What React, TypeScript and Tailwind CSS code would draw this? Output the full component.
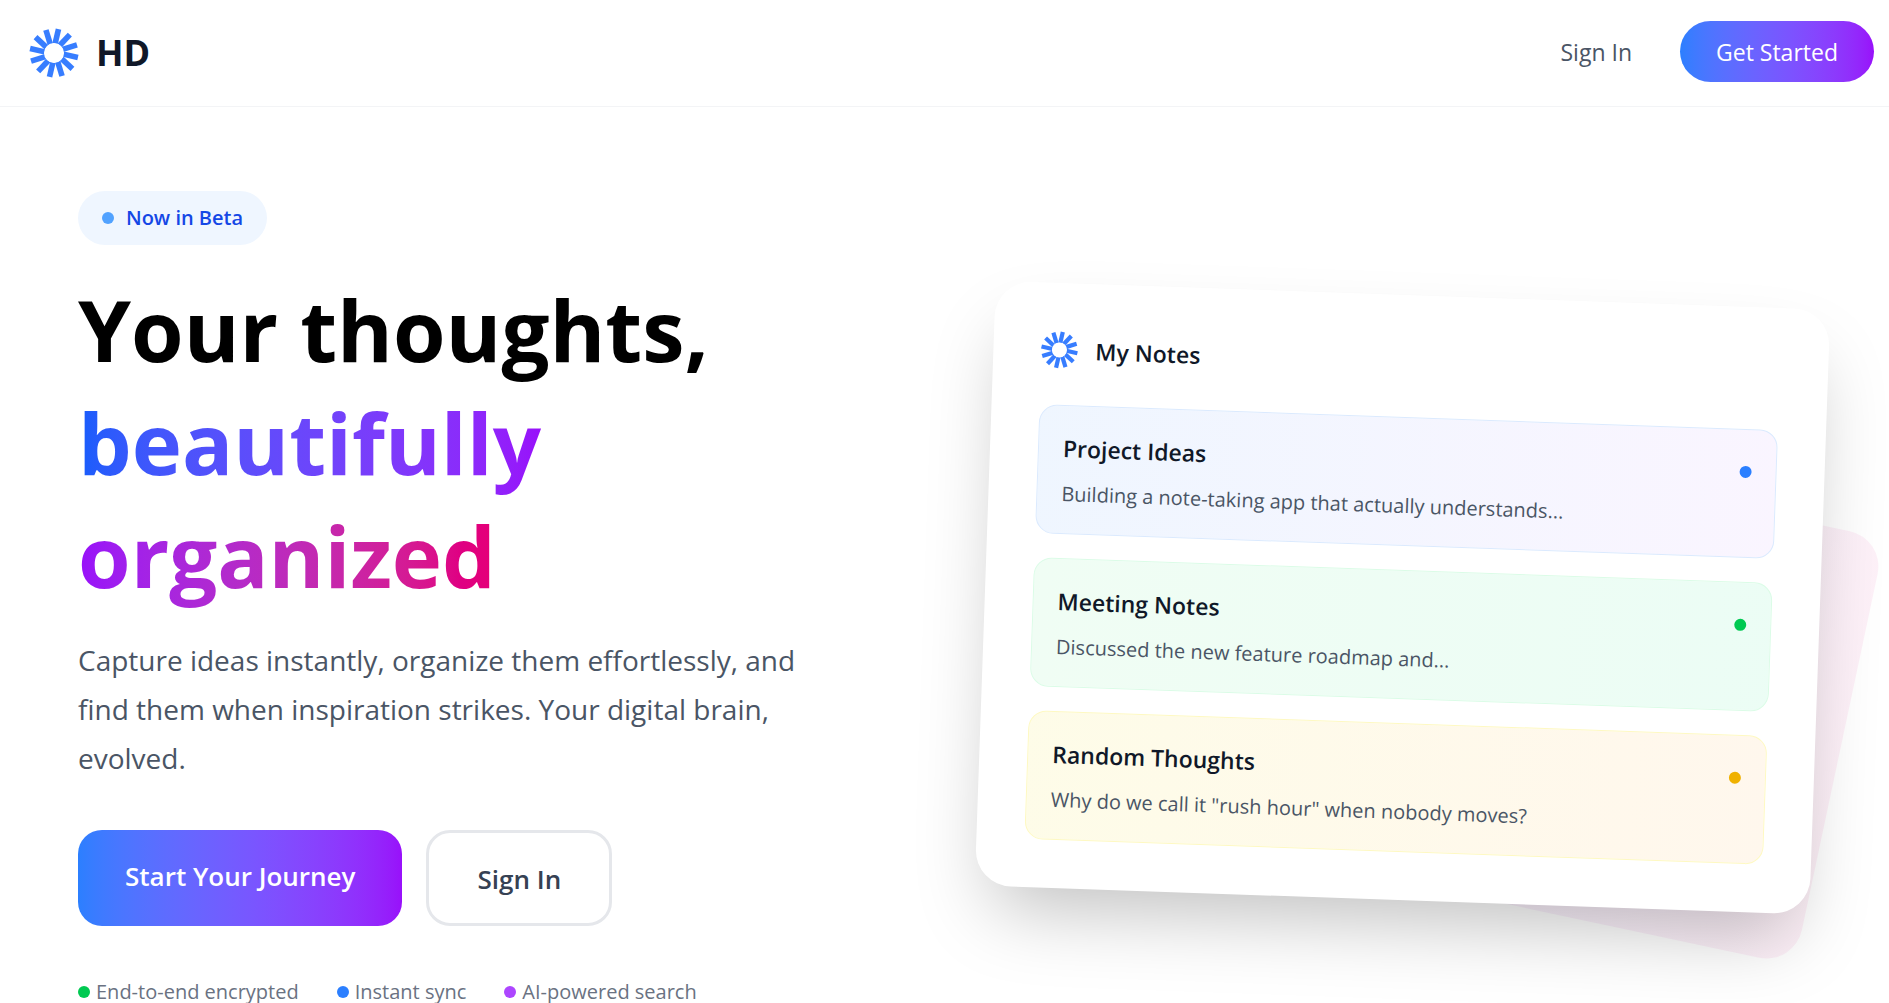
const RAYS = [13, 43, 73, 103, 133, 163, 193, 223, 253, 283, 313, 343];

function Logo({ className }: { className: string }) {
  return (
    <svg viewBox="0 0 48 48" className={`overflow-visible ${className}`} aria-hidden="true">
      {RAYS.map((angle) => (
        <rect key={angle} x="20.2" y="-0.3" width="5.6" height="15" fill="#377dff" transform={`rotate(${angle} 24 24)`} />
      ))}
      <circle cx="24" cy="24" r="10" fill="#fff" />
    </svg>
  );
}

const NOTES = [
  {
    title: "Project Ideas",
    text: "Building a note-taking app that actually understands...",
    box: "border-blue-100 from-blue-50 to-purple-50",
    dot: "bg-blue-500",
  },
  {
    title: "Meeting Notes",
    text: "Discussed the new feature roadmap and...",
    box: "border-green-100 from-green-50 to-emerald-50",
    dot: "bg-green-500",
  },
  {
    title: "Random Thoughts",
    text: 'Why do we call it "rush hour" when nobody moves?',
    box: "border-yellow-100 from-yellow-50 to-orange-50",
    dot: "bg-yellow-500",
  },
];

const FEATURES = [
  { label: "End-to-end encrypted", dot: "bg-green-500" },
  { label: "Instant sync", dot: "bg-blue-500" },
  { label: "AI-powered search", dot: "bg-purple-500" },
];

export default function App() {
  return (
    <div className="min-h-screen overflow-hidden bg-white font-['Open_Sans','Noto_Sans',sans-serif] text-gray-900">
      <header className="flex items-start justify-between border-b border-gray-100 pt-[21px] pr-[15px] pb-[22px] pl-[30px]">
        <a href="#" className="flex items-center gap-[18px]">
          <Logo className="size-12" />
          <span className="pt-px text-[36px] leading-[62px] font-bold">HD</span>
        </a>
        <nav className="flex items-center gap-12">
          <a href="#signin" className="text-[23px] leading-9 text-gray-600">Sign In</a>
          <button type="button" className="rounded-full bg-linear-to-r from-blue-500 to-purple-600 px-9 pt-[13px] pb-[11px] text-[23px] leading-[37px] text-white">
            Get Started
          </button>
        </nav>
      </header>

      <main className="grid grid-cols-2 items-center gap-24 px-[78px] pt-[84px]">
        <section>
          <div className="inline-flex items-center gap-3 rounded-full bg-blue-50 px-6 py-3 align-top">
            <span className="size-3 rounded-full bg-blue-400" />
            <span className="text-[20px] leading-[30px] font-semibold text-blue-700">Now in Beta</span>
          </div>
          <h1 className="mt-7 text-[85px] leading-[113px] font-bold text-black">
            <span className="block">Your thoughts,</span>
            <span className="block w-fit bg-linear-to-r from-blue-600 to-purple-600 bg-clip-text text-transparent">beautifully</span>
            <span className="block w-fit bg-linear-to-r from-purple-600 to-pink-600 bg-clip-text text-transparent">organized</span>
          </h1>
          <p className="mt-6 max-w-[768px] text-[28px] leading-[49px] text-gray-600">
            Capture ideas instantly, organize them effortlessly, and find them when inspiration strikes. Your digital brain, evolved.
          </p>
          <div className="mt-[47px] flex gap-6">
            <button type="button" className="flex items-start rounded-3xl bg-linear-to-r from-blue-500 to-purple-600 px-[47px] pt-[25px] pb-[23px] text-[26px] leading-[42px] font-semibold text-white">
              Start Your Journey
            </button>
            <button type="button" className="rounded-3xl border-3 border-gray-200 px-12 pt-[25px] pb-[23px] text-[26px] leading-[42px] font-semibold text-gray-700">
              Sign In
            </button>
          </div>
          <ul className="mt-[54px] flex gap-[38px]">
            {FEATURES.map((f) => (
              <li key={f.label} className="flex items-center gap-1.5 text-[20px] leading-6 text-gray-500">
                <span className={`size-3 rounded-full ${f.dot}`} />
                {f.label}
              </li>
            ))}
          </ul>
        </section>

        <section className="relative -mx-2">
          <div className="absolute -right-[26px] -bottom-5 h-[436px] w-[480px] rotate-12 rounded-[36px] bg-linear-to-r from-purple-100 to-pink-100 opacity-60" />
          <div className="relative rotate-2 rounded-[36px] bg-white p-12 shadow-[0_38px_76px_-18px_rgba(0,0,0,0.25)]">
            <div className="mb-9 flex items-center gap-[18px]">
              <Logo className="size-9 -rotate-2" />
              <h2 className="text-[23px] leading-[38px] font-semibold">My Notes</h2>
            </div>
            <div className="flex flex-col gap-6">
              {NOTES.map((n) => (
                <article key={n.title} className={`flex items-start justify-between rounded-[18px] border bg-linear-to-r p-6 ${n.box}`}>
                  <div>
                    <h3 className="text-[23px] leading-9 font-semibold">{n.title}</h3>
                    <p className="mt-3 text-[20px] leading-[31px] text-gray-600">{n.text}</p>
                  </div>
                  <span className={`mt-3 size-3 rounded-full ${n.dot}`} />
                </article>
              ))}
            </div>
          </div>
        </section>
      </main>
    </div>
  );
}
